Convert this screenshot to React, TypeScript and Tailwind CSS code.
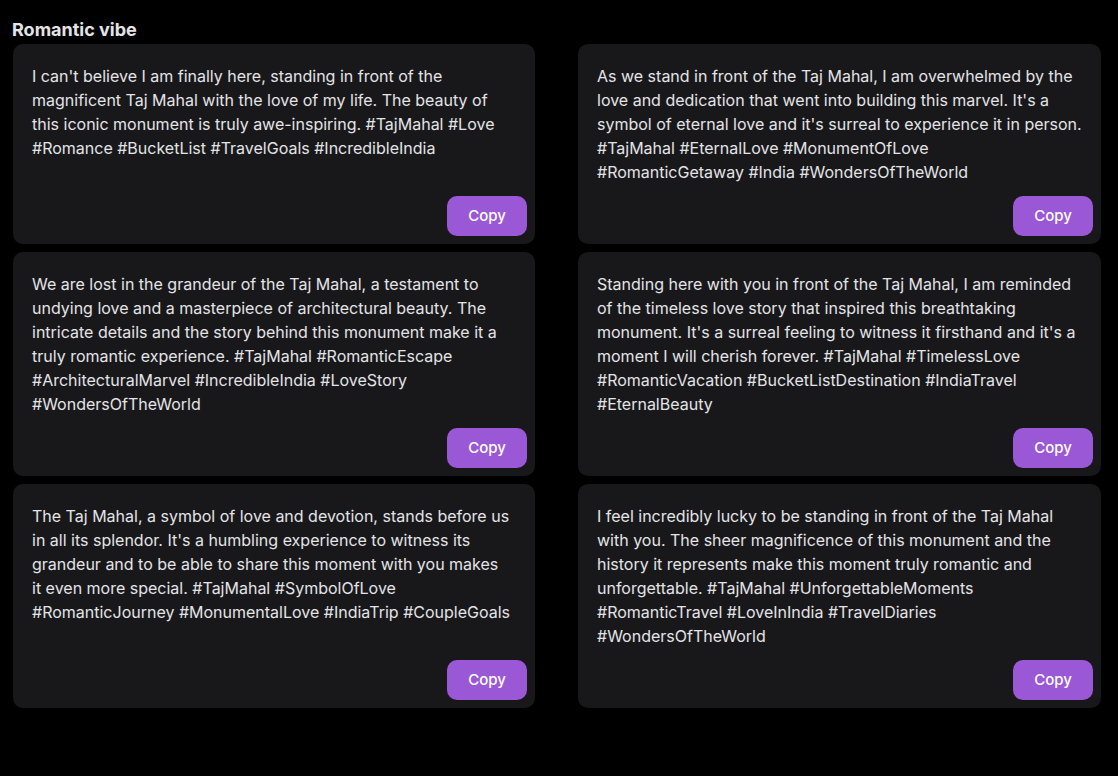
import React from "react";

const captions: string[][] = [
  [
    "I can't believe I am finally here, standing in front of the magnificent Taj Mahal with the love of my life. The beauty of this iconic monument is truly awe-inspiring. #TajMahal #Love #Romance #BucketList #TravelGoals #IncredibleIndia",
  ],
  [
    "As we stand in front of the Taj Mahal, I am overwhelmed by the love and dedication that went into building this marvel. It's a symbol of eternal love and it's surreal to experience it in person. #TajMahal #EternalLove #MonumentOfLove",
    "#RomanticGetaway #India #WondersOfTheWorld",
  ],
  [
    "We are lost in the grandeur of the Taj Mahal, a testament to undying love and a masterpiece of architectural beauty. The intricate details and the story behind this monument make it a truly romantic experience. #TajMahal #RomanticEscape #ArchitecturalMarvel #IncredibleIndia #LoveStory #WondersOfTheWorld",
  ],
  [
    "Standing here with you in front of the Taj Mahal, I am reminded of the timeless love story that inspired this breathtaking monument. It's a surreal feeling to witness it firsthand and it's a moment I will cherish forever. #TajMahal #TimelessLove #RomanticVacation #BucketListDestination #IndiaTravel #EternalBeauty",
  ],
  [
    "The Taj Mahal, a symbol of love and devotion, stands before us in all its splendor. It's a humbling experience to witness its grandeur and to be able to share this moment with you makes",
    "it even more special. #TajMahal #SymbolOfLove #RomanticJourney #MonumentalLove #IndiaTrip #CoupleGoals",
  ],
  [
    "I feel incredibly lucky to be standing in front of the Taj Mahal with you. The sheer magnificence of this monument and the history it represents make this moment truly romantic and unforgettable. #TajMahal #UnforgettableMoments #RomanticTravel #LoveInIndia #TravelDiaries #WondersOfTheWorld",
  ],
];

export default function App() {
  return (
    <div
      className="min-h-screen bg-black pt-4 pl-[13px] pb-8"
      style={{ fontFamily: "Inter, 'Noto Sans', sans-serif" }}
    >
      <h2 className="text-lg leading-7 font-bold text-[#e4e4e7] -ml-px">
        Romantic vibe
      </h2>
      <div className="grid grid-cols-[522px_523px] gap-x-[43px] gap-y-2">
        {captions.map((parts, i) => (
          <div
            key={i}
            className="flex flex-col justify-between bg-[#18181b] rounded-[10px] pt-5 pl-[19px] pr-2 pb-2"
          >
            <p
              className={
                i % 2 === 0
                  ? "text-base leading-6 text-[#e4e4e7] pr-[15px]"
                  : "text-base leading-6 text-[#e4e4e7] pr-[10px]"
              }
            >
              {parts.map((p, j) => (
                <React.Fragment key={j}>
                  {j > 0 && <br />}
                  {p}
                </React.Fragment>
              ))}
            </p>
            <div className="flex justify-end mt-3">
              <button className="w-20 h-10 rounded-[10px] bg-[#9b58d6] text-white text-[15px] font-medium">
                Copy
              </button>
            </div>
          </div>
        ))}
      </div>
    </div>
  );
}
